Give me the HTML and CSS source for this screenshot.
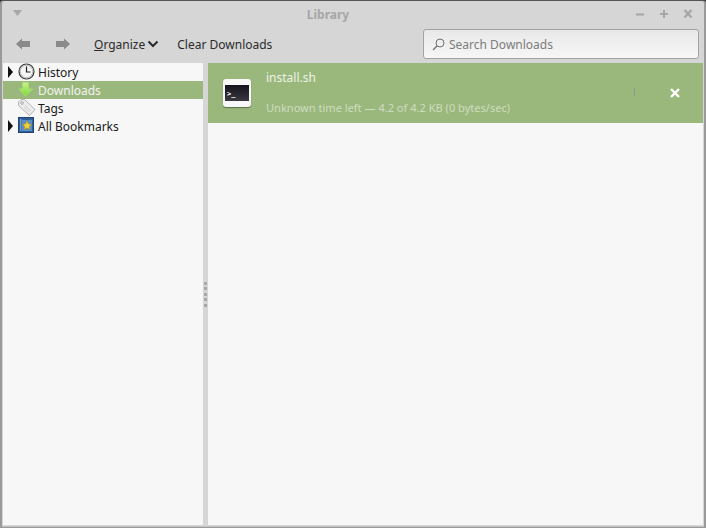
FILE: index.html
```html
<!DOCTYPE html>
<html lang="en">
<head>
<meta charset="utf-8">
<title>Library</title>
<link rel="stylesheet" href="styles.css">
</head>
<body>
<div class="window">
  <header class="titlebar">
    <svg class="menu-arrow" width="12" height="8" viewBox="0 0 12 8"><path d="M1 1h9L5.500 7z" fill="#a8a8a8"/></svg>
    <div class="title">Library</div>
    <div class="win-buttons">
      <svg width="12" height="12" viewBox="0 0 12 12"><path d="M2 6.500h8" stroke="#a6a6a6" stroke-width="2"/></svg>
      <svg width="12" height="12" viewBox="0 0 12 12"><path d="M2 6h8M6 2v8" stroke="#a6a6a6" stroke-width="2"/></svg>
      <svg width="12" height="12" viewBox="0 0 12 12"><path d="M2.500 2l7 7.500M9.500 2l-7 7.500" stroke="#a6a6a6" stroke-width="2.400"/></svg>
    </div>
  </header>
  <div class="toolbar">
    <svg class="nav-back" width="14" height="12" viewBox="0 0 14 12"><path d="M0 6l6-5.500V3h8v6H6v2.500z" fill="#8a8a8a"/></svg>
    <svg class="nav-forward" width="14" height="12" viewBox="0 0 14 12"><path d="M14 6L8 .5V3H0v6h8v2.500z" fill="#8a8a8a"/></svg>
    <div class="tool-btn organize"><span><span class="ul">O</span>rganize</span>
      <svg width="12" height="8" viewBox="0 0 12 8"><path d="M1.500 1.500L6 6l4.500-4.500" fill="none" stroke="#2b2b2b" stroke-width="2"/></svg>
    </div>
    <div class="tool-btn clear">Clear Downloads</div>
    <div class="search">
      <svg width="13" height="13" viewBox="0 0 13 13"><circle cx="8" cy="5" r="4" fill="none" stroke="#707070"/><path d="M5 8L1 12" stroke="#707070" stroke-width="1.200"/></svg>
      <span>Search Downloads</span>
    </div>
  </div>
  <div class="content">
    <nav class="sidebar">
      <div class="tree-row">
        <svg class="twisty" width="5" height="12" viewBox="0 0 5 12"><path d="M0 0l5 6-5 6z" fill="#111"/></svg>
        <svg class="row-icon" width="18" height="18" viewBox="0 0 18 18"><circle cx="8.500" cy="8.500" r="7.500" fill="#f6f6f6" stroke="#3a3a3a" stroke-width="1.200"/><circle cx="8.500" cy="8.500" r="6.200" fill="none" stroke="#aaa" stroke-width=".8"/><path d="M8.500 3.500v5.500h4" fill="none" stroke="#222" stroke-width="1.200"/></svg>
        <span>History</span>
      </div>
      <div class="tree-row selected">
        <span class="twisty-space"></span>
        <svg class="row-icon" width="18" height="18" viewBox="0 0 18 18"><defs><linearGradient id="dl" x1="0" y1="0" x2="0" y2="1"><stop offset="0" stop-color="#c8f58a"/><stop offset="1" stop-color="#78d834"/></linearGradient></defs><path d="M4.500 1.500h6v6.500h4L7.500 15.500 1 8h3.500z" fill="url(#dl)" stroke="#a9d87a" stroke-width=".8"/></svg>
        <span>Downloads</span>
      </div>
      <div class="tree-row">
        <span class="twisty-space"></span>
        <svg class="row-icon" width="18" height="18" viewBox="0 0 18 18"><path d="M.5 3L3 .5h3.500l10.500 10-5.500 6L.5 6.500z" fill="#ececec" stroke="#b4b4b4"/><circle cx="4" cy="4" r="1.300" fill="#fff" stroke="#a4a4a4"/><path d="M7 6l6 6M6 8l5 5" stroke="#d0d0d0"/></svg>
        <span>Tags</span>
      </div>
      <div class="tree-row">
        <svg class="twisty" width="5" height="12" viewBox="0 0 5 12"><path d="M0 0l5 6-5 6z" fill="#111"/></svg>
        <svg class="row-icon" width="18" height="18" viewBox="0 0 18 18"><rect x=".5" y=".5" width="15" height="15" fill="#2d5f9a" stroke="#1f4573"/><rect x="2" y="2" width="1.500" height="12" fill="#6f9ccc"/><rect x="4" y="3" width="10" height="11" fill="#5a8ec4"/><path d="M9 4l1.500 3 3 .4-2.200 2.100.6 3L9 11l-2.900 1.500.6-3L4.500 7.400l3-.4z" fill="#f3d13c" stroke="#b08d1e" stroke-width=".6"/></svg>
        <span>All Bookmarks</span>
      </div>
    </nav>
    <div class="splitter">
      <span></span><span></span><span></span><span></span><span></span>
    </div>
    <main class="downloads">
      <div class="download">
        <div class="file-icon"><div class="terminal">&gt;_</div></div>
        <div class="download-info">
          <div class="file-name">install.sh</div>
          <div class="file-status">Unknown time left — 4.2 of 4.2 KB (0 bytes/sec)</div>
        </div>
        <span class="divider"></span>
        <svg class="cancel" width="12" height="12" viewBox="0 0 12 12"><path d="M2 2l8 8M10 2l-8 8" stroke="#fff" stroke-width="2.400"/></svg>
      </div>
    </main>
  </div>
</div>
</body>
</html>
```
FILE: styles.css
```css
* { box-sizing: border-box; }
html, body { margin: 0; height: 100%; }
body {
  background: #333;
  font-family: "Noto Sans", sans-serif;
  font-size: 12px;
  color: #2b2b2b;
}
.window {
  width: 706px;
  height: 528px;
  display: flex;
  flex-direction: column;
  background: #d6d6d6;
  border: solid #9a9a9a;
  border-width: 1px 2px 1px 2px;
  border-top-color: #555;
  border-radius: 4px 4px 0 0;
  padding: 0 1px 2px 1px;
  box-shadow: inset 0 -1px 0 #c4c4c4;
}
.titlebar {
  height: 26px;
  flex: none;
  display: flex;
  align-items: center;
  padding: 0 9px 0 9px;
  position: relative;
}
.menu-arrow { margin-top: -2px; }
.title {
  position: absolute;
  left: 0;
  right: 50px;
  top: 5px;
  text-align: center;
  font-weight: 700;
  color: #a6a6a6;
  line-height: 17px;
}
.win-buttons {
  margin-left: auto;
  display: flex;
  gap: 12px;
}
.toolbar {
  height: 36px;
  flex: none;
  display: flex;
  align-items: center;
  padding: 0 4px 2px 13px;
}
.nav-forward { margin-left: 26px; }
.tool-btn { white-space: nowrap; line-height: 17px; }
.organize {
  margin-left: 24px;
  display: flex;
  align-items: center;
  gap: 2px;
}
.ul { text-decoration: underline; }
.clear { margin-left: 18px; }
.search {
  margin-left: auto;
  width: 276px;
  height: 30px;
  display: flex;
  align-items: center;
  gap: 4px;
  padding: 0 8px;
  border: 1px solid #a3a3a3;
  border-radius: 3px;
  background: linear-gradient(#e8e8e8, #f6f6f6);
  color: #7c7c7c;
}
.content {
  flex: 1;
  display: flex;
  min-height: 0;
}
.sidebar {
  width: 200px;
  flex: none;
  background: #f7f7f7;
}
.tree-row {
  height: 18px;
  display: flex;
  align-items: center;
  padding-left: 5px;
  color: #1a1a1a;
}
.tree-row.selected {
  background: #9ab87c;
  color: #f2f2f2;
}
.twisty, .twisty-space { width: 5px; flex: none; }
.row-icon { margin: 0 2px 0 5px; flex: none; }
.splitter {
  width: 5px;
  flex: none;
  display: flex;
  flex-direction: column;
  justify-content: center;
  align-items: center;
  gap: 2.500px;
  background: #d6d6d6;
}
.splitter span {
  width: 3px;
  height: 3px;
  background: #a8a8a8;
}
.downloads {
  flex: 1;
  background: #f7f7f7;
}
.download {
  height: 60px;
  display: flex;
  align-items: center;
  background: #9ab87c;
  position: relative;
}
.file-icon {
  width: 28px;
  height: 28px;
  margin-left: 15px;
  padding: 6px 2px;
  flex: none;
  border-radius: 3px;
  background: #f8f8f8;
  box-shadow: 0 1px 1px rgba(0,0,0,.4);
}
.terminal {
  height: 16px;
  background: linear-gradient(#14121a, #3a3842);
  color: #fff;
  font: 700 7px/18px "DejaVu Sans Mono", monospace;
  padding-left: 2px;
}
.download-info {
  margin-left: 15px;
  align-self: stretch;
  padding-top: 6px;
}
.file-name {
  color: #eef2e6;
  line-height: 18px;
}
.file-status {
  margin-top: 13px;
  font-size: 11.05px;
  line-height: 16px;
  color: #cfdcc0;
}
.divider {
  position: absolute;
  left: 426px;
  top: 25px;
  width: 1px;
  height: 8px;
  background: #8a9a88;
}
.cancel {
  position: absolute;
  left: 461px;
  top: 24px;
}
```
